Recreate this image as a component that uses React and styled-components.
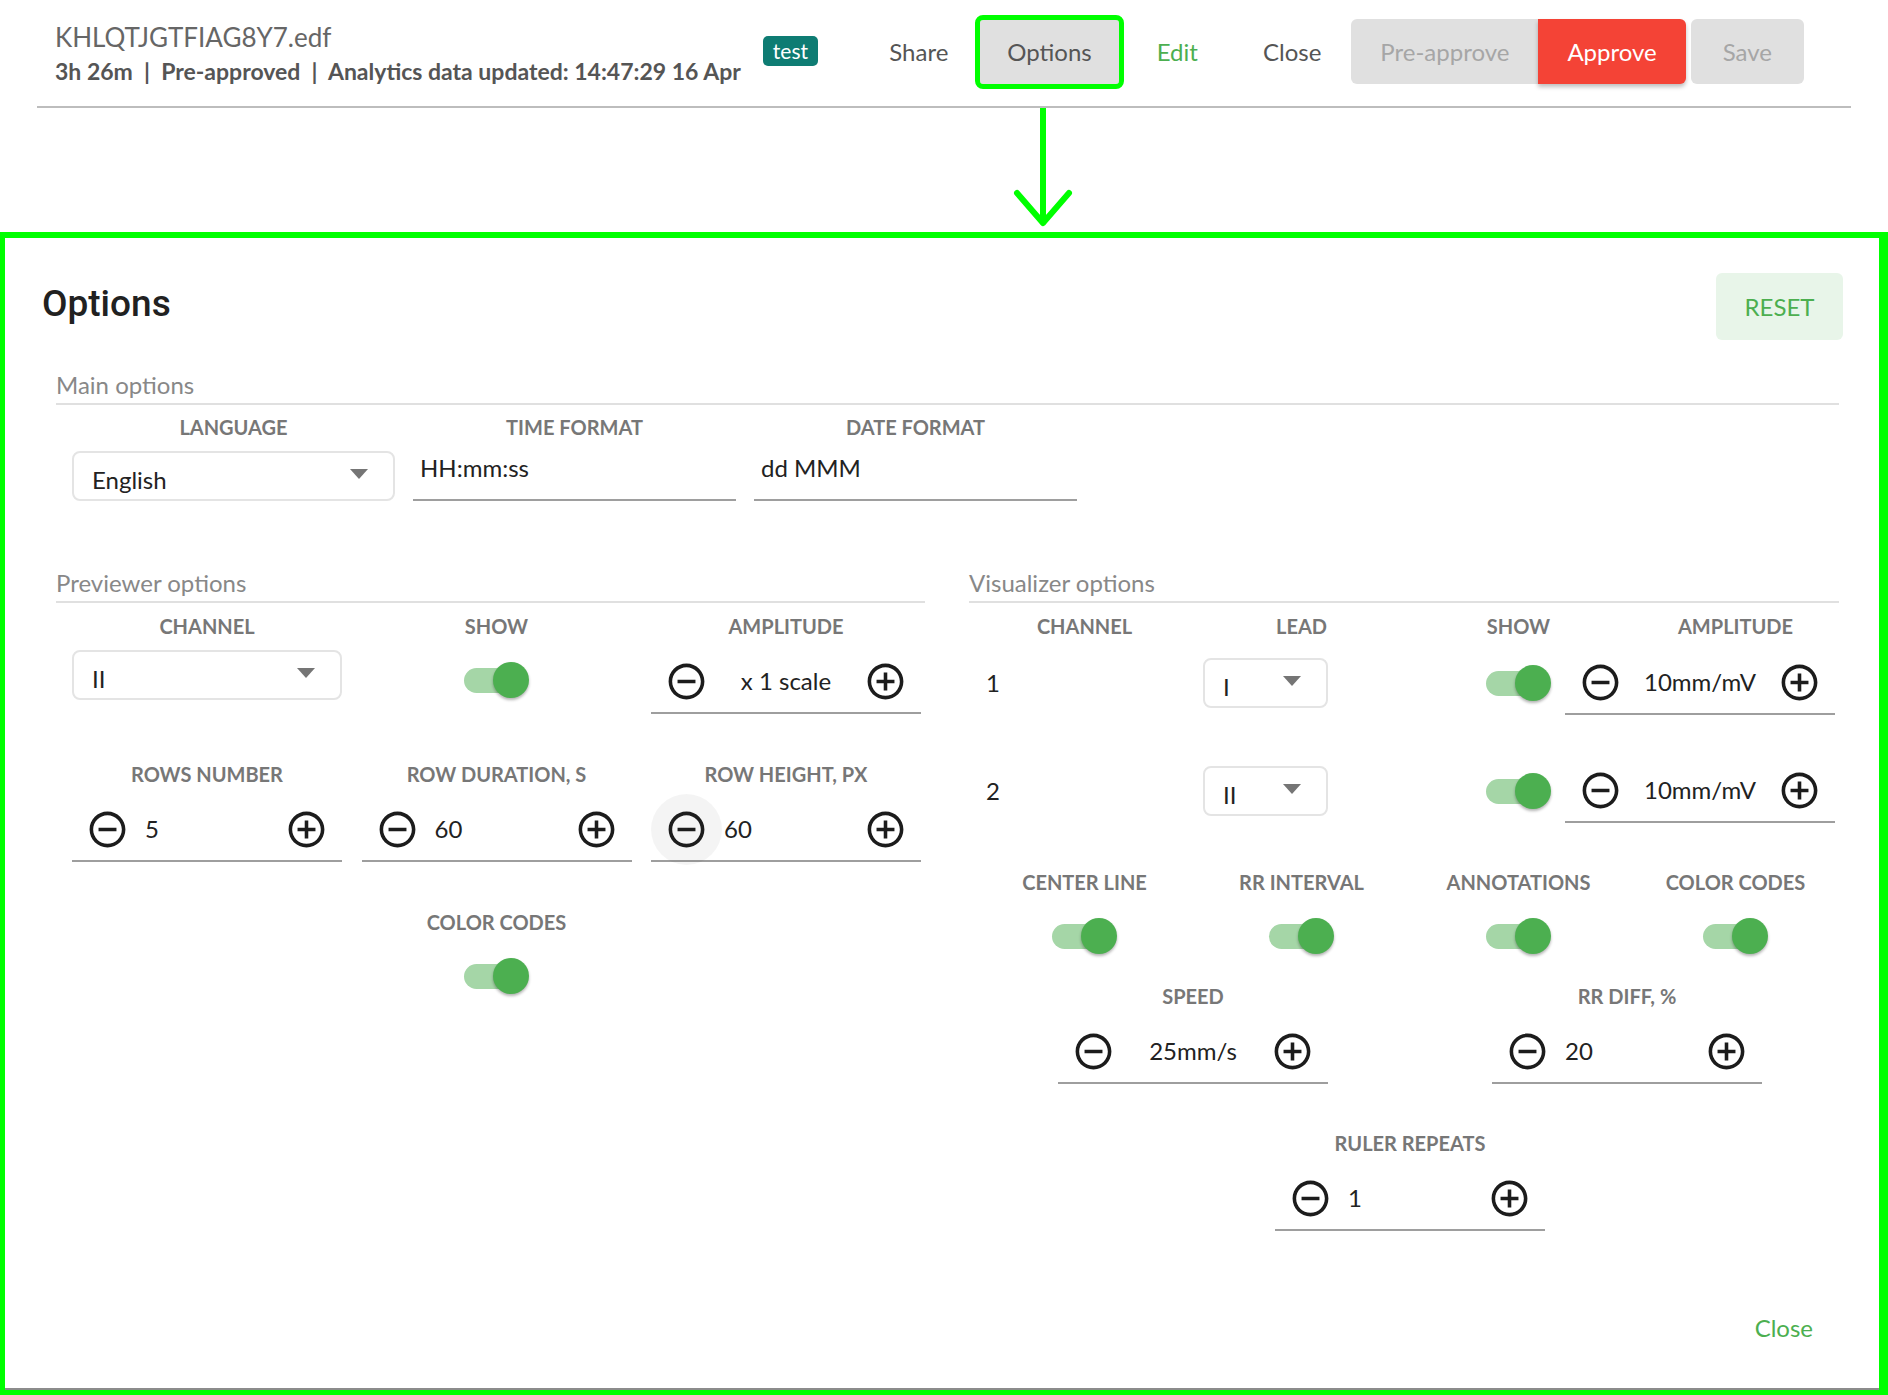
import React from "react"
import styled, { createGlobalStyle } from "styled-components"

const GlobalStyle = createGlobalStyle`
	html, body {
		margin: 0;
		padding: 0;
		background: #fff;
	}
	body {
		font-family: Lato, "Noto Sans", sans-serif;
	}
	* {
		box-sizing: border-box;
	}
`

const MinusIcon = () => (
	<svg viewBox="0 0 24 24">
		<path d="M7 11v2h10v-2H7zm5-9C6.48 2 2 6.480 2 12s4.48 10 10 10 10-4.48 10-10S17.52 2 12 2zm0 18c-4.41 0-8-3.59-8-8s3.59-8 8-8 8 3.59 8 8-3.59 8-8 8z" />
	</svg>
)

const PlusIcon = () => (
	<svg viewBox="0 0 24 24">
		<path d="M13 7h-2v4H7v2h4v4h2v-4h4v-2h-4V7zm-1-5C6.48 2 2 6.48 2 12s4.48 10 10 10 10-4.48 10-10S17.52 2 12 2zm0 18c-4.41 0-8-3.59-8-8s3.59-8 8-8 8 3.59 8 8-3.59 8-8 8z" />
	</svg>
)

const Caret = () => (
	<CaretSvg viewBox="0 0 18 10">
		<polygon points="0,0 18,0 9,10" />
	</CaretSvg>
)

const Select = ({ w, value }) => (
	<SelectBox $w={w}>
		<span>{value}</span>
		<Caret />
	</SelectBox>
)

const Switch = () => (
	<SwitchBox>
		<Track />
		<Thumb />
	</SwitchBox>
)

const Stepper = ({ value, center, hover }) => (
	<StepperBox>
		<IconBtn $hover={hover}><MinusIcon /></IconBtn>
		<StepValue $center={center}>{value}</StepValue>
		<IconBtn><PlusIcon /></IconBtn>
	</StepperBox>
)

const Field = ({ label, children }) => (
	<FieldBox>
		<Label>{label}</Label>
		{children}
	</FieldBox>
)

const App = () => {
	return (
		<Page>
			<GlobalStyle />
			<Header>
				<TitleBlock>
					<FileName>KHLQTJGTFIAG8Y7.edf</FileName>
					<Meta>3h 26m &nbsp;|&nbsp; Pre-approved &nbsp;|&nbsp; Analytics data updated: 14:47:29 16 Apr</Meta>
				</TitleBlock>
				<Badge>test</Badge>
				<Nav>
					<NavButton>Share</NavButton>
					<NavButton $active $ml="5px">Options</NavButton>
					<NavButton $green $ml="11px">Edit</NavButton>
					<NavButton $ml="11px">Close</NavButton>
					<Group>
						<GroupButton>Pre-approve</GroupButton>
						<GroupButton $primary>Approve</GroupButton>
					</Group>
					<SaveButton>Save</SaveButton>
				</Nav>
			</Header>

			<ArrowRow>
				<svg width="60" height="124" viewBox="0 0 60 124">
					<g stroke="#00ff00" strokeWidth="6" fill="none" strokeLinecap="round" strokeLinejoin="round">
						<line x1="30" y1="0" x2="30" y2="114" />
						<polyline points="4,85 30,115 56,85" />
					</g>
				</svg>
			</ArrowRow>

			<Panel>
				<Dialog>
					<TitleRow>
						<Title>Options</Title>
						<ResetButton>RESET</ResetButton>
					</TitleRow>

					<Body>
						<SectionHeader>Main options</SectionHeader>
						<MainRow>
							<Field label="Language">
								<Select w="323px" value="English" />
							</Field>
							<Field label="Time format">
								<TextInput>HH:mm:ss</TextInput>
							</Field>
							<Field label="Date format">
								<TextInput>dd MMM</TextInput>
							</Field>
						</MainRow>

						<Columns>
							<div>
								<SectionHeader>Previewer options</SectionHeader>
								<PreviewGrid>
									<Field label="Channel">
										<Select w="270px" value="II" />
									</Field>
									<Field label="Show">
										<Switch />
									</Field>
									<Field label="Amplitude">
										<Stepper value="x 1 scale" center />
									</Field>
									<Field label="Rows number">
										<Stepper value="5" />
									</Field>
									<Field label="Row duration, s">
										<Stepper value="60" />
									</Field>
									<Field label="Row height, px">
										<Stepper value="60" hover />
									</Field>
									<span />
									<Field label="Color codes">
										<Switch />
									</Field>
								</PreviewGrid>
							</div>

							<div>
								<SectionHeader>Visualizer options</SectionHeader>
								<VisBody>
									<Quad>
										<Label>Channel</Label>
										<Label>Lead</Label>
										<Label>Show</Label>
										<Label>Amplitude</Label>
									</Quad>
									{[["1", "I"], ["2", "II"]].map(([ch, lead]) => (
										<ChannelRow key={ch}>
											<ChNum>{ch}</ChNum>
											<Cell><Select w="125px" value={lead} /></Cell>
											<Cell $align="center"><Switch /></Cell>
											<Cell $align="flex-end"><Stepper value="10mm/mV" center /></Cell>
										</ChannelRow>
									))}
									<Quad $top="45px">
										<Label>Center line</Label>
										<Label>RR interval</Label>
										<Label>Annotations</Label>
										<Label>Color codes</Label>
									</Quad>
									<Quad $top="11px">
										<Cell $align="center"><Switch /></Cell>
										<Cell $align="center"><Switch /></Cell>
										<Cell $align="center"><Switch /></Cell>
										<Cell $align="center"><Switch /></Cell>
									</Quad>
									<Halves>
										<Field label="Speed">
											<Stepper value="25mm/s" center />
										</Field>
										<Field label="RR diff, %">
											<Stepper value="20" />
										</Field>
									</Halves>
									<Single>
										<Field label="Ruler repeats">
											<Stepper value="1" />
										</Field>
									</Single>
								</VisBody>
							</div>
						</Columns>
					</Body>

					<Footer>
						<CloseLink>Close</CloseLink>
					</Footer>
				</Dialog>
			</Panel>
		</Page>
	)
}

const Page = styled.div`
	width: 1888px;
	height: 1395px;
	display: flex;
	flex-direction: column;
	overflow: hidden;
`

const Header = styled.div`
	display: flex;
	align-items: center;
	height: 108px;
	margin: 0 37px;
	padding: 0 47px 3px 18px;
	border-bottom: 2px solid #bdbdbd;
	flex-shrink: 0;
`

const TitleBlock = styled.div`
	display: flex;
	flex-direction: column;
	gap: 4px;
	margin-top: 2px;
`

const FileName = styled.div`
	font-size: 26px;
	line-height: 32px;
	color: #666;
`

const Meta = styled.div`
	font-size: 23px;
	line-height: 28px;
	font-weight: 700;
	color: #555;
	white-space: nowrap;
`

const Badge = styled.div`
	align-self: flex-start;
	margin: 36px 0 0 22px;
	height: 30px;
	padding: 0 10px;
	border-radius: 5px;
	background: #0e7c73;
	color: #fff;
	font-size: 21px;
	line-height: 30px;
`

const Nav = styled.div`
	margin-left: auto;
	display: flex;
	align-items: center;
`

const NavButton = styled.button`
	height: 64px;
	margin-left: ${p => p.$ml || "0"};
	padding: 0 27px;
	border: 0;
	border-radius: 3px;
	background: ${p => p.$active ? "#e0e0e0" : "transparent"};
	outline: ${p => p.$active ? "5px solid #00ff00" : "none"};
	color: ${p => p.$green ? "#4caf50" : "#555"};
	font-family: Lato, sans-serif;
	font-size: 24px;
`

const Group = styled.div`
	display: flex;
	margin-left: 3px;
`

const GroupButton = styled.button`
	height: 65px;
	padding: 0 29px;
	border: 0;
	font-family: Lato, sans-serif;
	font-size: 24px;
	background: ${p => p.$primary ? "#f44336" : "#e0e0e0"};
	color: ${p => p.$primary ? "#fff" : "#a6a6a6"};
	box-shadow: ${p => p.$primary ? "0 3px 4px rgba(0,0,0,0.25)" : "none"};
	&:first-child {
		border-radius: 6px 0 0 6px;
	}
	&:last-child {
		border-radius: 0 6px 6px 0;
	}
`

const SaveButton = styled.button`
	height: 65px;
	margin-left: 5px;
	padding: 0 32px;
	border: 0;
	border-radius: 6px;
	background: #e0e0e0;
	color: #a6a6a6;
	font-family: Lato, sans-serif;
	font-size: 24px;
`

const ArrowRow = styled.div`
	height: 124px;
	padding-left: 1013px;
	flex-shrink: 0;
	svg {
		display: block;
	}
`

const Panel = styled.div`
	flex: 1;
	display: flex;
	flex-direction: column;
	border: solid #00ff00;
	border-width: 6px 9px 5px 5px;
`

const Dialog = styled.div`
	flex: 1;
	display: flex;
	flex-direction: column;
	padding: 35px 36px 45px 37px;
	border-bottom: 2px solid #8c8c8c;
`

const TitleRow = styled.div`
	display: flex;
	align-items: center;
	justify-content: space-between;
	height: 67px;
`

const Title = styled.h1`
	margin: -6px 0 0;
	font-family: Roboto, "Liberation Sans", sans-serif;
	font-weight: 500;
	font-size: 37px;
	color: #212121;
`

const ResetButton = styled.button`
	width: 127px;
	height: 67px;
	border: 0;
	border-radius: 6px;
	background: #e8f5e9;
	color: #4caf50;
	font-family: Lato, sans-serif;
	font-size: 24px;
`

const Body = styled.div`
	margin: 30px 4px 0 14px;
`

const SectionHeader = styled.div`
	font-size: 24px;
	line-height: 30px;
	color: #888;
	padding-bottom: 3px;
	border-bottom: 2px solid #e0e0e0;
`

const MainRow = styled.div`
	display: flex;
	gap: 18px;
	margin-top: 9px;
	padding-left: 16px;
`

const FieldBox = styled.div`
	display: flex;
	flex-direction: column;
	align-items: center;
	gap: 11px;
`

const Label = styled.div`
	font-size: 20px;
	line-height: 26px;
	font-weight: 700;
	color: #777;
	text-transform: uppercase;
	text-align: center;
	white-space: nowrap;
`

const SelectBox = styled.div`
	width: ${p => p.$w};
	height: 50px;
	display: flex;
	align-items: center;
	justify-content: space-between;
	padding: 7px 25px 0 18px;
	border: 2px solid #e4e4e4;
	border-radius: 8px;
	font-size: 24px;
	line-height: 30px;
	color: #222;
`

const CaretSvg = styled.svg`
	width: 18px;
	height: 10px;
	margin-top: -11px;
	fill: #757575;
	flex-shrink: 0;
`

const TextInput = styled.div`
	width: 323px;
	height: 50px;
	padding: 2px 7px 0;
	border-bottom: 2px solid #9e9e9e;
	font-size: 24px;
	line-height: 30px;
	color: #222;
`

const Columns = styled.div`
	display: grid;
	grid-template-columns: 869px 870px;
	column-gap: 44px;
	margin-top: 67px;
`

const PreviewGrid = styled.div`
	display: grid;
	grid-template-columns: repeat(3, 270px);
	column-gap: 19.5px;
	row-gap: 47px;
	margin-top: 10px;
	padding-left: 16px;
`

const SwitchBox = styled.div`
	position: relative;
	width: 65px;
	height: 36px;
	margin: 12px 0;
	flex-shrink: 0;
`

const Track = styled.div`
	position: absolute;
	left: 0;
	top: 5.5px;
	width: 61px;
	height: 25px;
	border-radius: 13px;
	background: #a5d6a7;
`

const Thumb = styled.div`
	position: absolute;
	right: 0;
	top: 0;
	width: 36px;
	height: 36px;
	border-radius: 50%;
	background: #4caf50;
	box-shadow: 0 2px 3px rgba(0, 0, 0, 0.3);
`

const StepperBox = styled.div`
	width: 270px;
	height: 64px;
	display: flex;
	align-items: center;
	border-bottom: 2px solid #9e9e9e;
	flex-shrink: 0;
`

const IconBtn = styled.div`
	width: 71px;
	height: 71px;
	padding: 14px;
	border-radius: 50%;
	flex-shrink: 0;
	background: ${p => p.$hover ? "rgba(0, 0, 0, 0.045)" : "transparent"};
	svg {
		display: block;
		width: 43px;
		height: 43px;
		fill: #1c1c1c;
	}
`

const StepValue = styled.div`
	flex: 1;
	padding-left: ${p => p.$center ? "0" : "2px"};
	text-align: ${p => p.$center ? "center" : "left"};
	font-size: 24px;
	line-height: 30px;
	color: #222;
	white-space: nowrap;
`

const VisBody = styled.div`
	margin-top: 10px;
	padding-left: 7px;
`

const Quad = styled.div`
	display: grid;
	grid-template-columns: repeat(4, 217px);
	margin-top: ${p => p.$top || "0"};
`

const ChannelRow = styled.div`
	display: grid;
	grid-template-columns: repeat(4, 217px);
	align-items: center;
	height: 66px;
	margin-top: 11px;
	& + & {
		margin-top: 42px;
	}
`

const ChNum = styled.div`
	padding-left: 10px;
	font-size: 24px;
	line-height: 30px;
	color: #222;
`

const Cell = styled.div`
	display: flex;
	justify-content: ${p => p.$align || "flex-start"};
	padding: ${p => p.$align === "flex-end" ? "0 9px 0 0" : p.$align === "center" ? "0" : "0 0 0 10px"};
`

const Halves = styled.div`
	display: grid;
	grid-template-columns: repeat(2, 434px);
	margin-top: 17px;
`

const Single = styled.div`
	display: flex;
	justify-content: center;
	width: 868px;
	margin-top: 46px;
`

const Footer = styled.div`
	margin-top: auto;
	display: flex;
	justify-content: flex-end;
	padding-right: 30px;
`

const CloseLink = styled.div`
	font-size: 24px;
	line-height: 30px;
	color: #4caf50;
`

export default App
